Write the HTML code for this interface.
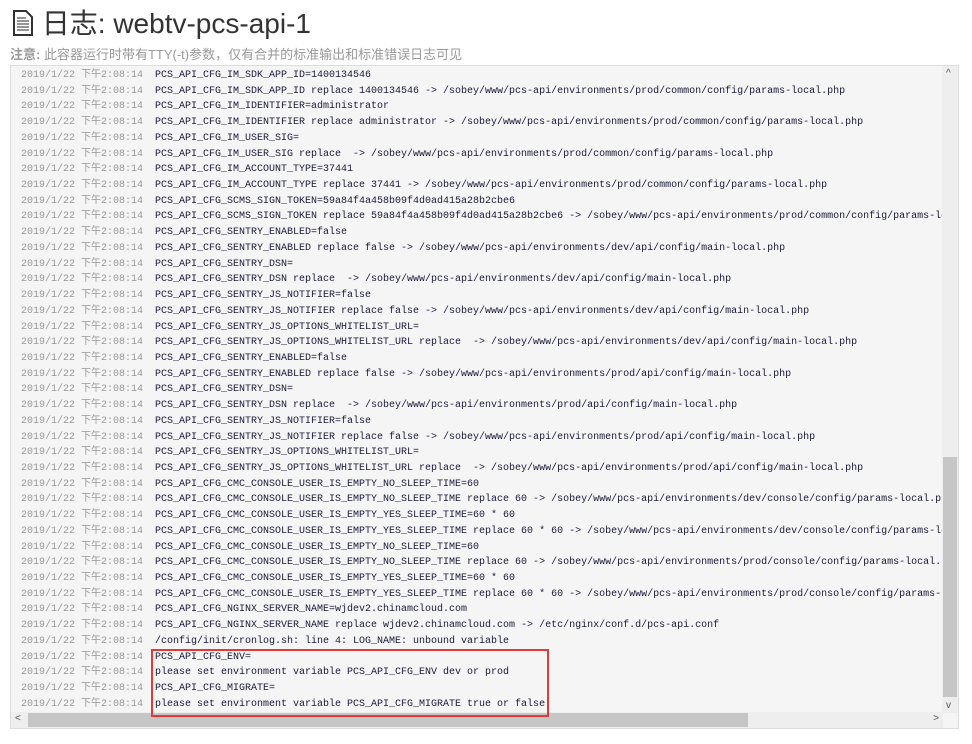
<!DOCTYPE html>
<html><head><meta charset="utf-8"><style>
body{margin:0;background:#fff;width:972px;height:744px;overflow:hidden;position:relative;font-family:"Liberation Sans","Noto Sans CJK SC",sans-serif}
h1{position:absolute;left:12px;top:6px;margin:0;font-weight:normal;font-size:28px;color:#333;line-height:36px}
.note{position:absolute;left:10px;top:44px;font-size:13px;color:#999}
.note b{color:#999}
.box{position:absolute;left:10px;top:65px;width:949px;height:664px;border:1px solid #ddd;background:#f5f5f5;box-sizing:border-box;overflow:hidden}
.lines{position:absolute;left:10px;top:2px;font-family:"Liberation Mono","Noto Sans CJK SC",monospace;font-size:10px}
.l{height:15.72px;line-height:15.72px;white-space:pre;overflow:hidden}
.t{color:#999;display:inline-block;width:134px;font-size:10px}
.m{color:#1a1a3a}
.vs{position:absolute;right:0;top:0;width:16px;height:647px;background:#eee}
.vt{position:absolute;right:1px;top:391px;width:14px;height:240px;background:#c6c6c6}
.hs{position:absolute;left:0;bottom:0;width:932px;height:16px;background:#eee}
.ht{position:absolute;left:17px;bottom:1px;width:720px;height:14px;background:#c6c6c6}
.red{position:absolute;left:151px;top:649px;width:398px;height:68px;border:2px solid #e53935;box-sizing:border-box}
.ar{position:absolute;font-size:10px;color:#555}
</style></head><body>
<h1><svg width="22" height="26" viewBox="0 0 22 26" style="vertical-align:-3px"><path d="M2 1h12l6 6v18H2z" fill="#fff" stroke="#333" stroke-width="2"/><path d="M5 8h9M5 11h12M5 14h12M5 17h12M5 20h12" stroke="#555" stroke-width="1.2"/></svg> 日志: webtv-pcs-api-1</h1>
<div class="note"><b>注意:</b> 此容器运行时带有TTY(-t)参数，仅有合并的标准输出和标准错误日志可见</div>
<div class="box">
<div class="lines">
<div class="l"><span class="t">2019/1/22 下午2:08:14</span><span class="m">PCS_API_CFG_IM_SDK_APP_ID=1400134546</span></div>
<div class="l"><span class="t">2019/1/22 下午2:08:14</span><span class="m">PCS_API_CFG_IM_SDK_APP_ID replace 1400134546 -> /sobey/www/pcs-api/environments/prod/common/config/params-local.php</span></div>
<div class="l"><span class="t">2019/1/22 下午2:08:14</span><span class="m">PCS_API_CFG_IM_IDENTIFIER=administrator</span></div>
<div class="l"><span class="t">2019/1/22 下午2:08:14</span><span class="m">PCS_API_CFG_IM_IDENTIFIER replace administrator -> /sobey/www/pcs-api/environments/prod/common/config/params-local.php</span></div>
<div class="l"><span class="t">2019/1/22 下午2:08:14</span><span class="m">PCS_API_CFG_IM_USER_SIG=</span></div>
<div class="l"><span class="t">2019/1/22 下午2:08:14</span><span class="m">PCS_API_CFG_IM_USER_SIG replace  -> /sobey/www/pcs-api/environments/prod/common/config/params-local.php</span></div>
<div class="l"><span class="t">2019/1/22 下午2:08:14</span><span class="m">PCS_API_CFG_IM_ACCOUNT_TYPE=37441</span></div>
<div class="l"><span class="t">2019/1/22 下午2:08:14</span><span class="m">PCS_API_CFG_IM_ACCOUNT_TYPE replace 37441 -> /sobey/www/pcs-api/environments/prod/common/config/params-local.php</span></div>
<div class="l"><span class="t">2019/1/22 下午2:08:14</span><span class="m">PCS_API_CFG_SCMS_SIGN_TOKEN=59a84f4a458b09f4d0ad415a28b2cbe6</span></div>
<div class="l"><span class="t">2019/1/22 下午2:08:14</span><span class="m">PCS_API_CFG_SCMS_SIGN_TOKEN replace 59a84f4a458b09f4d0ad415a28b2cbe6 -> /sobey/www/pcs-api/environments/prod/common/config/params-local.php</span></div>
<div class="l"><span class="t">2019/1/22 下午2:08:14</span><span class="m">PCS_API_CFG_SENTRY_ENABLED=false</span></div>
<div class="l"><span class="t">2019/1/22 下午2:08:14</span><span class="m">PCS_API_CFG_SENTRY_ENABLED replace false -> /sobey/www/pcs-api/environments/dev/api/config/main-local.php</span></div>
<div class="l"><span class="t">2019/1/22 下午2:08:14</span><span class="m">PCS_API_CFG_SENTRY_DSN=</span></div>
<div class="l"><span class="t">2019/1/22 下午2:08:14</span><span class="m">PCS_API_CFG_SENTRY_DSN replace  -> /sobey/www/pcs-api/environments/dev/api/config/main-local.php</span></div>
<div class="l"><span class="t">2019/1/22 下午2:08:14</span><span class="m">PCS_API_CFG_SENTRY_JS_NOTIFIER=false</span></div>
<div class="l"><span class="t">2019/1/22 下午2:08:14</span><span class="m">PCS_API_CFG_SENTRY_JS_NOTIFIER replace false -> /sobey/www/pcs-api/environments/dev/api/config/main-local.php</span></div>
<div class="l"><span class="t">2019/1/22 下午2:08:14</span><span class="m">PCS_API_CFG_SENTRY_JS_OPTIONS_WHITELIST_URL=</span></div>
<div class="l"><span class="t">2019/1/22 下午2:08:14</span><span class="m">PCS_API_CFG_SENTRY_JS_OPTIONS_WHITELIST_URL replace  -> /sobey/www/pcs-api/environments/dev/api/config/main-local.php</span></div>
<div class="l"><span class="t">2019/1/22 下午2:08:14</span><span class="m">PCS_API_CFG_SENTRY_ENABLED=false</span></div>
<div class="l"><span class="t">2019/1/22 下午2:08:14</span><span class="m">PCS_API_CFG_SENTRY_ENABLED replace false -> /sobey/www/pcs-api/environments/prod/api/config/main-local.php</span></div>
<div class="l"><span class="t">2019/1/22 下午2:08:14</span><span class="m">PCS_API_CFG_SENTRY_DSN=</span></div>
<div class="l"><span class="t">2019/1/22 下午2:08:14</span><span class="m">PCS_API_CFG_SENTRY_DSN replace  -> /sobey/www/pcs-api/environments/prod/api/config/main-local.php</span></div>
<div class="l"><span class="t">2019/1/22 下午2:08:14</span><span class="m">PCS_API_CFG_SENTRY_JS_NOTIFIER=false</span></div>
<div class="l"><span class="t">2019/1/22 下午2:08:14</span><span class="m">PCS_API_CFG_SENTRY_JS_NOTIFIER replace false -> /sobey/www/pcs-api/environments/prod/api/config/main-local.php</span></div>
<div class="l"><span class="t">2019/1/22 下午2:08:14</span><span class="m">PCS_API_CFG_SENTRY_JS_OPTIONS_WHITELIST_URL=</span></div>
<div class="l"><span class="t">2019/1/22 下午2:08:14</span><span class="m">PCS_API_CFG_SENTRY_JS_OPTIONS_WHITELIST_URL replace  -> /sobey/www/pcs-api/environments/prod/api/config/main-local.php</span></div>
<div class="l"><span class="t">2019/1/22 下午2:08:14</span><span class="m">PCS_API_CFG_CMC_CONSOLE_USER_IS_EMPTY_NO_SLEEP_TIME=60</span></div>
<div class="l"><span class="t">2019/1/22 下午2:08:14</span><span class="m">PCS_API_CFG_CMC_CONSOLE_USER_IS_EMPTY_NO_SLEEP_TIME replace 60 -> /sobey/www/pcs-api/environments/dev/console/config/params-local.php</span></div>
<div class="l"><span class="t">2019/1/22 下午2:08:14</span><span class="m">PCS_API_CFG_CMC_CONSOLE_USER_IS_EMPTY_YES_SLEEP_TIME=60 * 60</span></div>
<div class="l"><span class="t">2019/1/22 下午2:08:14</span><span class="m">PCS_API_CFG_CMC_CONSOLE_USER_IS_EMPTY_YES_SLEEP_TIME replace 60 * 60 -> /sobey/www/pcs-api/environments/dev/console/config/params-local.php</span></div>
<div class="l"><span class="t">2019/1/22 下午2:08:14</span><span class="m">PCS_API_CFG_CMC_CONSOLE_USER_IS_EMPTY_NO_SLEEP_TIME=60</span></div>
<div class="l"><span class="t">2019/1/22 下午2:08:14</span><span class="m">PCS_API_CFG_CMC_CONSOLE_USER_IS_EMPTY_NO_SLEEP_TIME replace 60 -> /sobey/www/pcs-api/environments/prod/console/config/params-local.php</span></div>
<div class="l"><span class="t">2019/1/22 下午2:08:14</span><span class="m">PCS_API_CFG_CMC_CONSOLE_USER_IS_EMPTY_YES_SLEEP_TIME=60 * 60</span></div>
<div class="l"><span class="t">2019/1/22 下午2:08:14</span><span class="m">PCS_API_CFG_CMC_CONSOLE_USER_IS_EMPTY_YES_SLEEP_TIME replace 60 * 60 -> /sobey/www/pcs-api/environments/prod/console/config/params-local.php</span></div>
<div class="l"><span class="t">2019/1/22 下午2:08:14</span><span class="m">PCS_API_CFG_NGINX_SERVER_NAME=wjdev2.chinamcloud.com</span></div>
<div class="l"><span class="t">2019/1/22 下午2:08:14</span><span class="m">PCS_API_CFG_NGINX_SERVER_NAME replace wjdev2.chinamcloud.com -> /etc/nginx/conf.d/pcs-api.conf</span></div>
<div class="l"><span class="t">2019/1/22 下午2:08:14</span><span class="m">/config/init/cronlog.sh: line 4: LOG_NAME: unbound variable</span></div>
<div class="l"><span class="t">2019/1/22 下午2:08:14</span><span class="m">PCS_API_CFG_ENV=</span></div>
<div class="l"><span class="t">2019/1/22 下午2:08:14</span><span class="m">please set environment variable PCS_API_CFG_ENV dev or prod</span></div>
<div class="l"><span class="t">2019/1/22 下午2:08:14</span><span class="m">PCS_API_CFG_MIGRATE=</span></div>
<div class="l"><span class="t">2019/1/22 下午2:08:14</span><span class="m">please set environment variable PCS_API_CFG_MIGRATE true or false</span></div>
</div>
<div class="vs"><div class="vt"></div><span class="ar" style="left:4px;top:2px">^</span><span class="ar" style="left:4px;bottom:2px">v</span></div>
<div class="hs"><div class="ht"></div><span class="ar" style="left:4px;top:1px">&lt;</span><span class="ar" style="right:4px;top:1px">&gt;</span></div>
</div>
<div class="red"></div>
</body></html>
